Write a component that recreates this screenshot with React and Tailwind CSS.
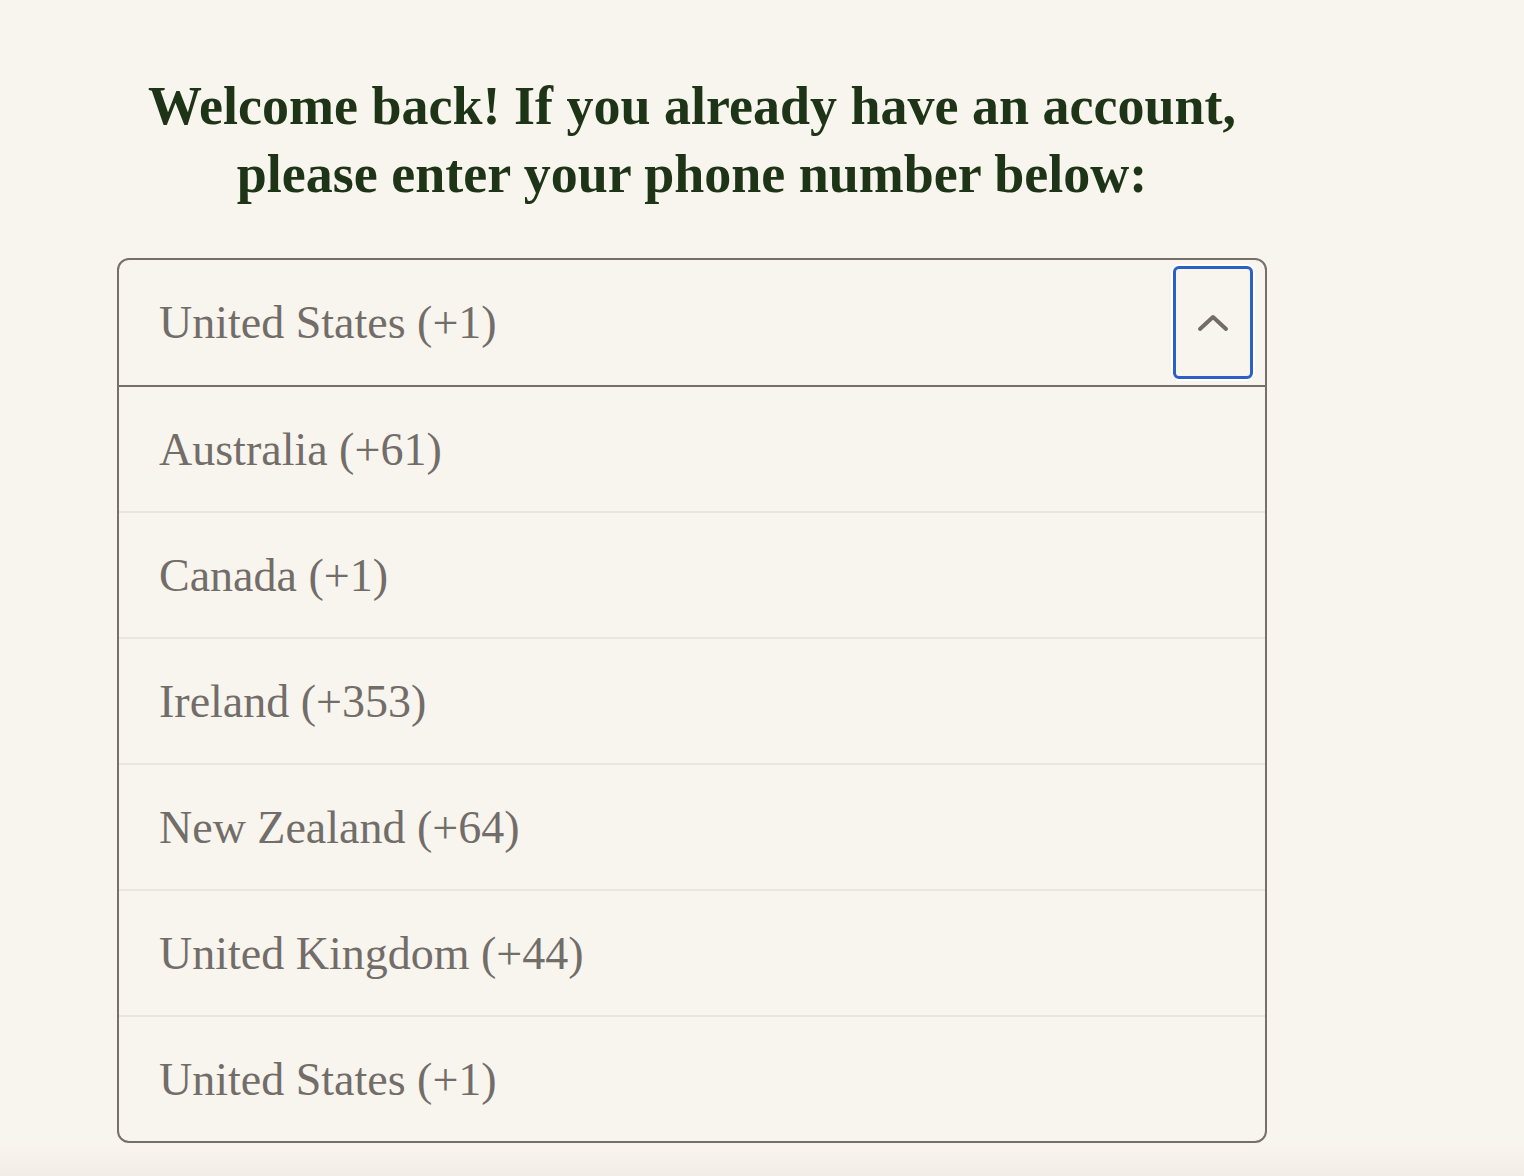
import { useState } from "react";

export default function App() {
  const [selected] = useState("United States (+1)");

  const countries = [
    "Australia (+61)",
    "Canada (+1)",
    "Ireland (+353)",
    "New Zealand (+64)",
    "United Kingdom (+44)",
    "United States (+1)",
  ];

  return (
    <div
      className="min-h-[1176px] bg-[linear-gradient(to_bottom,#f8f4ee_0px,#f8f4ee_1145px,#f2ede6_1176px)]"
      style={{ fontFamily: '"Liberation Serif", "DejaVu Serif", serif' }}
    >
      <div className="w-[1150px] ml-[117px] pt-[72px]">
        <h1 className="text-center text-[54px] leading-[68px] font-bold text-[#1e3416]">
          Welcome back! If you already have an account,
          <br />
          please enter your phone number below:
        </h1>

        {/* ================= DROPDOWN ================= */}
        <div className="mt-[50px] border-2 border-[#767069] rounded-[12px] overflow-hidden">
          <div className="h-[127px] flex items-center justify-between pl-[40px] pr-[12px] border-b-2 border-[#767069]">
            <span className="text-[46px] text-[#726d69]">{selected}</span>
            <button className="w-[80px] h-[113px] flex items-center justify-center rounded-[6px] border-[3px] border-[#2c5fc7] ring-2 ring-white">
              <svg width="32" height="18" viewBox="0 0 32 18" fill="none">
                <path
                  d="M3 15 L16 3 L29 15"
                  stroke="#736d69"
                  strokeWidth="4"
                  strokeLinecap="round"
                  strokeLinejoin="round"
                />
              </svg>
            </button>
          </div>

          {countries.map((c, i) => (
            <div
              key={c}
              className={`flex items-center pl-[40px] ${
                i < countries.length - 1 ? "h-[126px] border-b-2 border-[#e9e6e2]" : "h-[124px]"
              }`}
            >
              <span className="text-[46px] text-[#726d69]">{c}</span>
            </div>
          ))}
        </div>
      </div>
    </div>
  );
}
